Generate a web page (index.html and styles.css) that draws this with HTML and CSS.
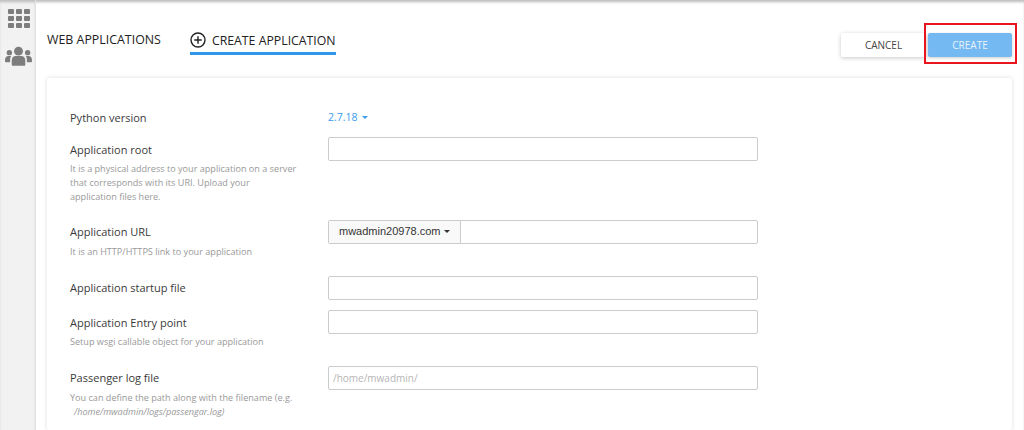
FILE: index.html
```html
<!DOCTYPE html>
<html lang="en">
<head>
<meta charset="utf-8">
<title>Create application</title>
<link rel="stylesheet" href="styles.css">
</head>
<body>
<div class="app">
  <aside class="sidebar">
    <svg class="ico-grid" width="22" height="19" viewBox="0 0 22 19"><g fill="#7d7d7d"><rect x="0" y="0" width="6" height="5" rx="1"/><rect x="8" y="0" width="6" height="5" rx="1"/><rect x="16" y="0" width="6" height="5" rx="1"/><rect x="0" y="7" width="6" height="5" rx="1"/><rect x="8" y="7" width="6" height="5" rx="1"/><rect x="16" y="7" width="6" height="5" rx="1"/><rect x="0" y="14" width="6" height="5" rx="1"/><rect x="8" y="14" width="6" height="5" rx="1"/><rect x="16" y="14" width="6" height="5" rx="1"/></g></svg>
    <svg class="ico-users" width="27" height="20" viewBox="0 0 28 20"><g fill="#7d7d7d"><circle cx="14" cy="5" r="4.6"/><circle cx="4.5" cy="6.5" r="2.8"/><circle cx="23.5" cy="6.5" r="2.8"/><path d="M7 19v-4.5C7 11.5 9 10 11 10h6c2 0 4 1.500 4 4.500V19c0 .6-.4 1-1 1H8c-.6 0-1-.4-1-1z"/><path d="M0 14.500C0 11.500 1.500 10 3.500 10H6.500C5.700 11 5.300 12.500 5.300 14.500V16.500H1.200C.4 16.500 0 16 0 15.500z"/><path d="M28 14.500C28 11.500 26.500 10 24.500 10H21.500C22.300 11 22.700 12.500 22.700 14.500V16.500H26.800C27.600 16.500 28 16 28 15.500z"/></g></svg>
  </aside>
  <main class="content">
    <header class="topbar">
      <nav class="tabs">
        <a class="tab">WEB APPLICATIONS</a>
        <a class="tab tab-active">
          <svg width="16" height="16" viewBox="0 0 16 16"><circle cx="8" cy="8" r="7" fill="none" stroke="#222" stroke-width="1.400"/><path d="M8 4.300v7.400M4.300 8h7.400" stroke="#222" stroke-width="1.400"/></svg>
          <span class="tab-text">CREATE APPLICATION</span>
        </a>
      </nav>
      <div class="actions">
        <button class="btn btn-cancel">CANCEL</button>
        <span class="highlight"><button class="btn btn-create">CREATE</button></span>
      </div>
    </header>
    <section class="card">
      <div class="row row-version">
        <div class="label-col"><label class="label">Python version</label></div>
        <div class="field-col"><span class="version">2.7.18 <i class="caret caret-blue"></i></span></div>
      </div>
      <div class="row row-root">
        <div class="label-col">
          <label class="label">Application root</label>
          <p class="hint">It is a physical address to your application on a server<br>that corresponds with its URI. Upload your<br>application files here.</p>
        </div>
        <div class="field-col"><input class="input" type="text"></div>
      </div>
      <div class="row row-url">
        <div class="label-col">
          <label class="label">Application URL</label>
          <p class="hint">It is an HTTP/HTTPS link to your application</p>
        </div>
        <div class="field-col">
          <div class="group">
            <span class="addon">mwadmin20978.com <i class="caret caret-addon"></i></span>
            <input class="group-input" type="text">
          </div>
        </div>
      </div>
      <div class="row row-startup">
        <div class="label-col"><label class="label">Application startup file</label></div>
        <div class="field-col"><input class="input" type="text"></div>
      </div>
      <div class="row row-entry">
        <div class="label-col">
          <label class="label">Application Entry point</label>
          <p class="hint">Setup wsgi callable object for your application</p>
        </div>
        <div class="field-col"><input class="input" type="text"></div>
      </div>
      <div class="row row-log">
        <div class="label-col">
          <label class="label">Passenger log file</label>
          <p class="hint">You can define the path along with the filename (e.g. <em class="example">/home/mwadmin/logs/passengar.log)</em></p>
        </div>
        <div class="field-col"><input class="input" type="text" placeholder="/home/mwadmin/"></div>
      </div>
    </section>
  </main>
</div>
</body>
</html>
```
FILE: styles.css
```css
*, *::before, *::after { box-sizing: border-box; }
html, body { margin: 0; height: 430px; overflow: hidden; background: #fff; }
body { font-family: "Open Sans", sans-serif; color: #333; }
.app { display: flex; height: 430px; overflow: hidden; box-shadow: inset 0 3px 3px -1px #bbb; }
.sidebar {
  width: 36px; flex: none; background: #f2f2f2;
  border-right: 1px solid #e2e2e2;
  display: flex; flex-direction: column; align-items: center;
  padding-top: 9px; gap: 18px;
  box-shadow: inset 0 3px 3px -1px #bbb;
}
.ico-grid { margin-left: 2px; }
.ico-users { margin-left: 2px; }
.content { flex: 1; min-width: 0; padding: 0 12px 0 11px; }
.topbar { display: flex; justify-content: space-between; height: 78px; }
.tabs { display: flex; gap: 29px; padding-top: 30px; }
.tab { font-size: 12.400px; color: #222; height: 25px; line-height: 19px; }
.tab-active {
  display: flex; gap: 6px; align-items: flex-start;
  border-bottom: 3px solid #2f96ea;
  font-size: 12.300px; line-height: 20px; height: 25px;
}
.tab-active svg { margin-top: 2px; }
.tab-text { display: block; padding-top: 1px; }
.actions { display: flex; align-items: flex-start; padding-top: 33px; position: relative; }
.btn {
  font-family: "Open Sans", sans-serif; font-size: 10px; height: 24px;
  border: 0; border-radius: 2px; padding: 0; cursor: pointer;
}
.btn-cancel { width: 85px; background: #fff; color: #444; box-shadow: 0 1px 4px rgba(0,0,0,.22); }
.highlight { display: block; margin-left: 2px; }
.btn-create { display: block; width: 84px; background: #74b9f2; color: #e8f3fc; box-shadow: 0 1px 3px rgba(0,0,0,.2); }
.highlight::after {
  content: ""; position: absolute; right: -5px; top: 23px; width: 93px; height: 41px;
  border: 2px solid #e8141e; pointer-events: none;
}
.card {
  height: 352px; background: #fff; padding: 0 23px;
  border-radius: 2px; box-shadow: 0 0 4px rgba(0,0,0,.14);
}
.row { display: flex; }
.label-col { width: 258px; flex: none; }
.field-col { flex: none; width: 430px; }
.label { display: block; font-size: 11px; line-height: 15px; color: #3a3a3a; }
.hint { margin: 5px 0 0; width: 240px; font-size: 9.100px; line-height: 14px; color: #999; }
.row-log .hint { width: 232px; }
.example { display: block; padding-left: 4px; }
.row-version { padding-top: 32px; height: 59px; }
.row-root { height: 83px; }
.row-url { height: 56px; }
.row-startup { height: 34px; }
.row-entry { height: 56px; }
.row-root .label { margin-top: 5px; }
.row-url .label { margin-top: 4px; }
.row-url .hint { margin-top: 6px; }
.row-startup .label { margin-top: 4px; }
.row-entry .label { margin-top: 5px; }
.row-log .label { margin-top: 4px; }
.row-log .hint { margin-top: 6px; }
.version { font-size: 10.500px; line-height: 15px; color: #3b9cec; display: block; }
.caret {
  display: inline-block; width: 0; height: 0; vertical-align: 2px; margin-left: 2px;
  border-left: 3px solid transparent; border-right: 3px solid transparent; border-top: 3px solid #333;
}
.caret-blue { border-top-color: #3b9cec; }
.caret-addon { margin-left: 0; }
.input, .group {
  width: 430px; height: 24px; border: 1px solid #ccc; border-radius: 2px; background: #fff;
}
.input { display: block; padding: 0 4px; font-family: "Open Sans", sans-serif; font-size: 10px; outline: 0; }
.input::placeholder { color: #b5b5b5; opacity: 1; }
.group { display: flex; }
.addon {
  width: 132px; flex: none; background: #f9f9f9; border-right: 1px solid #ccc;
  font-family: "Liberation Sans", sans-serif; font-size: 11px; line-height: 21px; padding-left: 10px; color: #333;
}
.group-input { flex: 1; min-width: 0; border: 0; background: transparent; outline: 0; }
```
